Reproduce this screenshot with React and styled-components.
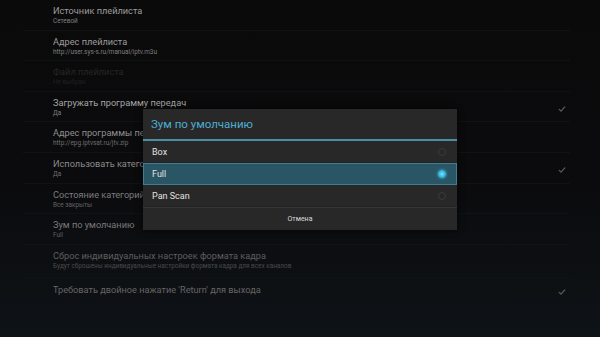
import React from 'react';
import styled, { createGlobalStyle } from 'styled-components';

const GlobalStyle = createGlobalStyle`
	html, body {
		margin: 0;
		padding: 0;
		width: 600px;
		height: 337px;
		overflow: hidden;
		background: #0b0b0c;
	}
	body {
		font-family: Roboto, "Noto Sans", "Liberation Sans", sans-serif;
	}
`;

const Screen = styled.div`
	position: relative;
	width: 600px;
	height: 337px;
	overflow: hidden;
	background: linear-gradient(180deg, #0a0a0b 0%, #0b0b0d 55%, #0e1317 100%);
`;

const List = styled.div`
	display: flex;
	flex-direction: column;
	padding: 0 30px 0 23px;
`;

const Row = styled.div`
	height: ${p => p.$h || 30.6}px;
	box-sizing: border-box;
	padding: 5px 0 0 30px;
	border-bottom: 1px solid ${p => (p.$last ? 'transparent' : '#111213')};

	display: flex;
	align-items: flex-start;
	justify-content: space-between;
`;

const Texts = styled.div`
	display: flex;
	flex-direction: column;
`;

const Title = styled.div`
	font-size: 9.2px;
	line-height: 12px;
	color: ${p => p.$c || '#9c9c9c'};
	white-space: nowrap;
`;

const Sub = styled.div`
	font-size: 6.4px;
	line-height: 9px;
	color: ${p => p.$c || '#7e7e7e'};
	white-space: nowrap;
`;

const Check = styled.div`
	width: 14px;
	height: 14px;
	margin-right: 1px;
	display: flex;
	align-items: center;
	justify-content: center;
	align-self: center;
`;

const Overlay = styled.div`
	position: absolute;
	inset: 0;
	display: flex;
	align-items: center;
	justify-content: center;
	padding-top: 1px;
`;

const Dialog = styled.div`
	width: 314px;
	background: #282828;
	box-shadow: 0 0 6px rgba(0, 0, 0, 0.8);
	display: flex;
	flex-direction: column;
`;

const DialogTitle = styled.div`
	height: 30px;
	padding-left: 8px;
	display: flex;
	align-items: center;
	font-size: 11.5px;
	color: #4eaed2;
	border-bottom: 2px solid #4b8da4;
`;

const Option = styled.div`
	height: 22px;
	box-sizing: border-box;
	padding: 0 10px 0 8px;
	display: flex;
	align-items: center;
	justify-content: space-between;
	font-size: 9px;
	color: #e2e2e2;
	background: ${p => (p.$active ? '#2a5565' : 'transparent')};
	border: 1px solid ${p => (p.$active ? '#3f7d8f' : 'transparent')};
	border-bottom: 1px solid ${p => (p.$active ? '#3f7d8f' : '#222')};
`;

const Radio = styled.div`
	width: 8px;
	height: 8px;
	border-radius: 50%;
	box-sizing: border-box;
	border: 1px solid ${p => (p.$on ? '#3fc3ea' : '#3b3b3b')};
	background: ${p => (p.$on ? 'radial-gradient(circle, #8ee4ff 0%, #35bde6 60%, #2a8fb0 100%)' : 'transparent')};
	box-shadow: ${p => (p.$on ? '0 0 3px #3fc3ea' : 'none')};
`;

const Footer = styled.div`
	height: 22px;
	border-top: 1px solid #363636;
	display: flex;
	align-items: center;
	justify-content: center;
	font-size: 7px;
	color: #dcdcdc;
`;

const CheckMark = ({ c = '#4f5d5e' }) => (
	<Check>
		<svg width="8" height="8" viewBox="0 0 8 8">
			<path d="M1.2 4.4 L3 6.1 L6.8 1.9" fill="none" stroke={c} strokeWidth="1.3" strokeLinecap="round" />
		</svg>
	</Check>
);

const items = [
	{ t: 'Источник плейлиста', s: 'Сетевой' },
	{ t: 'Адрес плейлиста', s: 'http://user.sys-s.ru/manual/iptv.m3u' },
	{ t: 'Файл плейлиста', s: 'Не выбран', tc: '#262626', sc: '#202020' },
	{ t: 'Загружать программу передач', s: 'Да', tc: '#a4a4a4', check: true },
	{ t: 'Адрес программы передач', s: 'http://epg.iptvsat.ru/jtv.zip', tc: '#8e8e8e', sc: '#6e6e6e' },
	{ t: 'Использовать категории', s: 'Да', tc: '#8a8a8a', sc: '#6e6e6e', check: true },
	{ t: 'Состояние категорий', s: 'Все закрыты', tc: '#7c7c7c', sc: '#626262' },
	{ t: 'Зум по умолчанию', s: 'Full', tc: '#7a7a7a', sc: '#5e5e5e' },
	{
		t: 'Сброс индивидуальных настроек формата кадра',
		s: 'Будут сброшены индивидуальные настройки формата кадра для всех каналов',
		tc: '#5e5e5e',
		sc: '#4a4a4a',
		h: 34,
	},
	{ t: "Требовать двойное нажатие 'Return' для выхода", tc: '#656565', check: true, h: 22, last: true },
];

const options = ['Box', 'Full', 'Pan Scan'];

export default function App() {
	return (
		<Screen>
			<GlobalStyle />
			<List>
				{items.map(it => (
					<Row key={it.t} $h={it.h} $last={it.last}>
						<Texts>
							<Title $c={it.tc}>{it.t}</Title>
							{it.s && <Sub $c={it.sc}>{it.s}</Sub>}
						</Texts>
						{it.check && <CheckMark />}
					</Row>
				))}
			</List>
			<Overlay>
				<Dialog>
					<DialogTitle>Зум по умолчанию</DialogTitle>
					{options.map(o => (
						<Option key={o} $active={o === 'Full'}>
							{o}
							<Radio $on={o === 'Full'} />
						</Option>
					))}
					<Footer>Отмена</Footer>
				</Dialog>
			</Overlay>
		</Screen>
	);
}
